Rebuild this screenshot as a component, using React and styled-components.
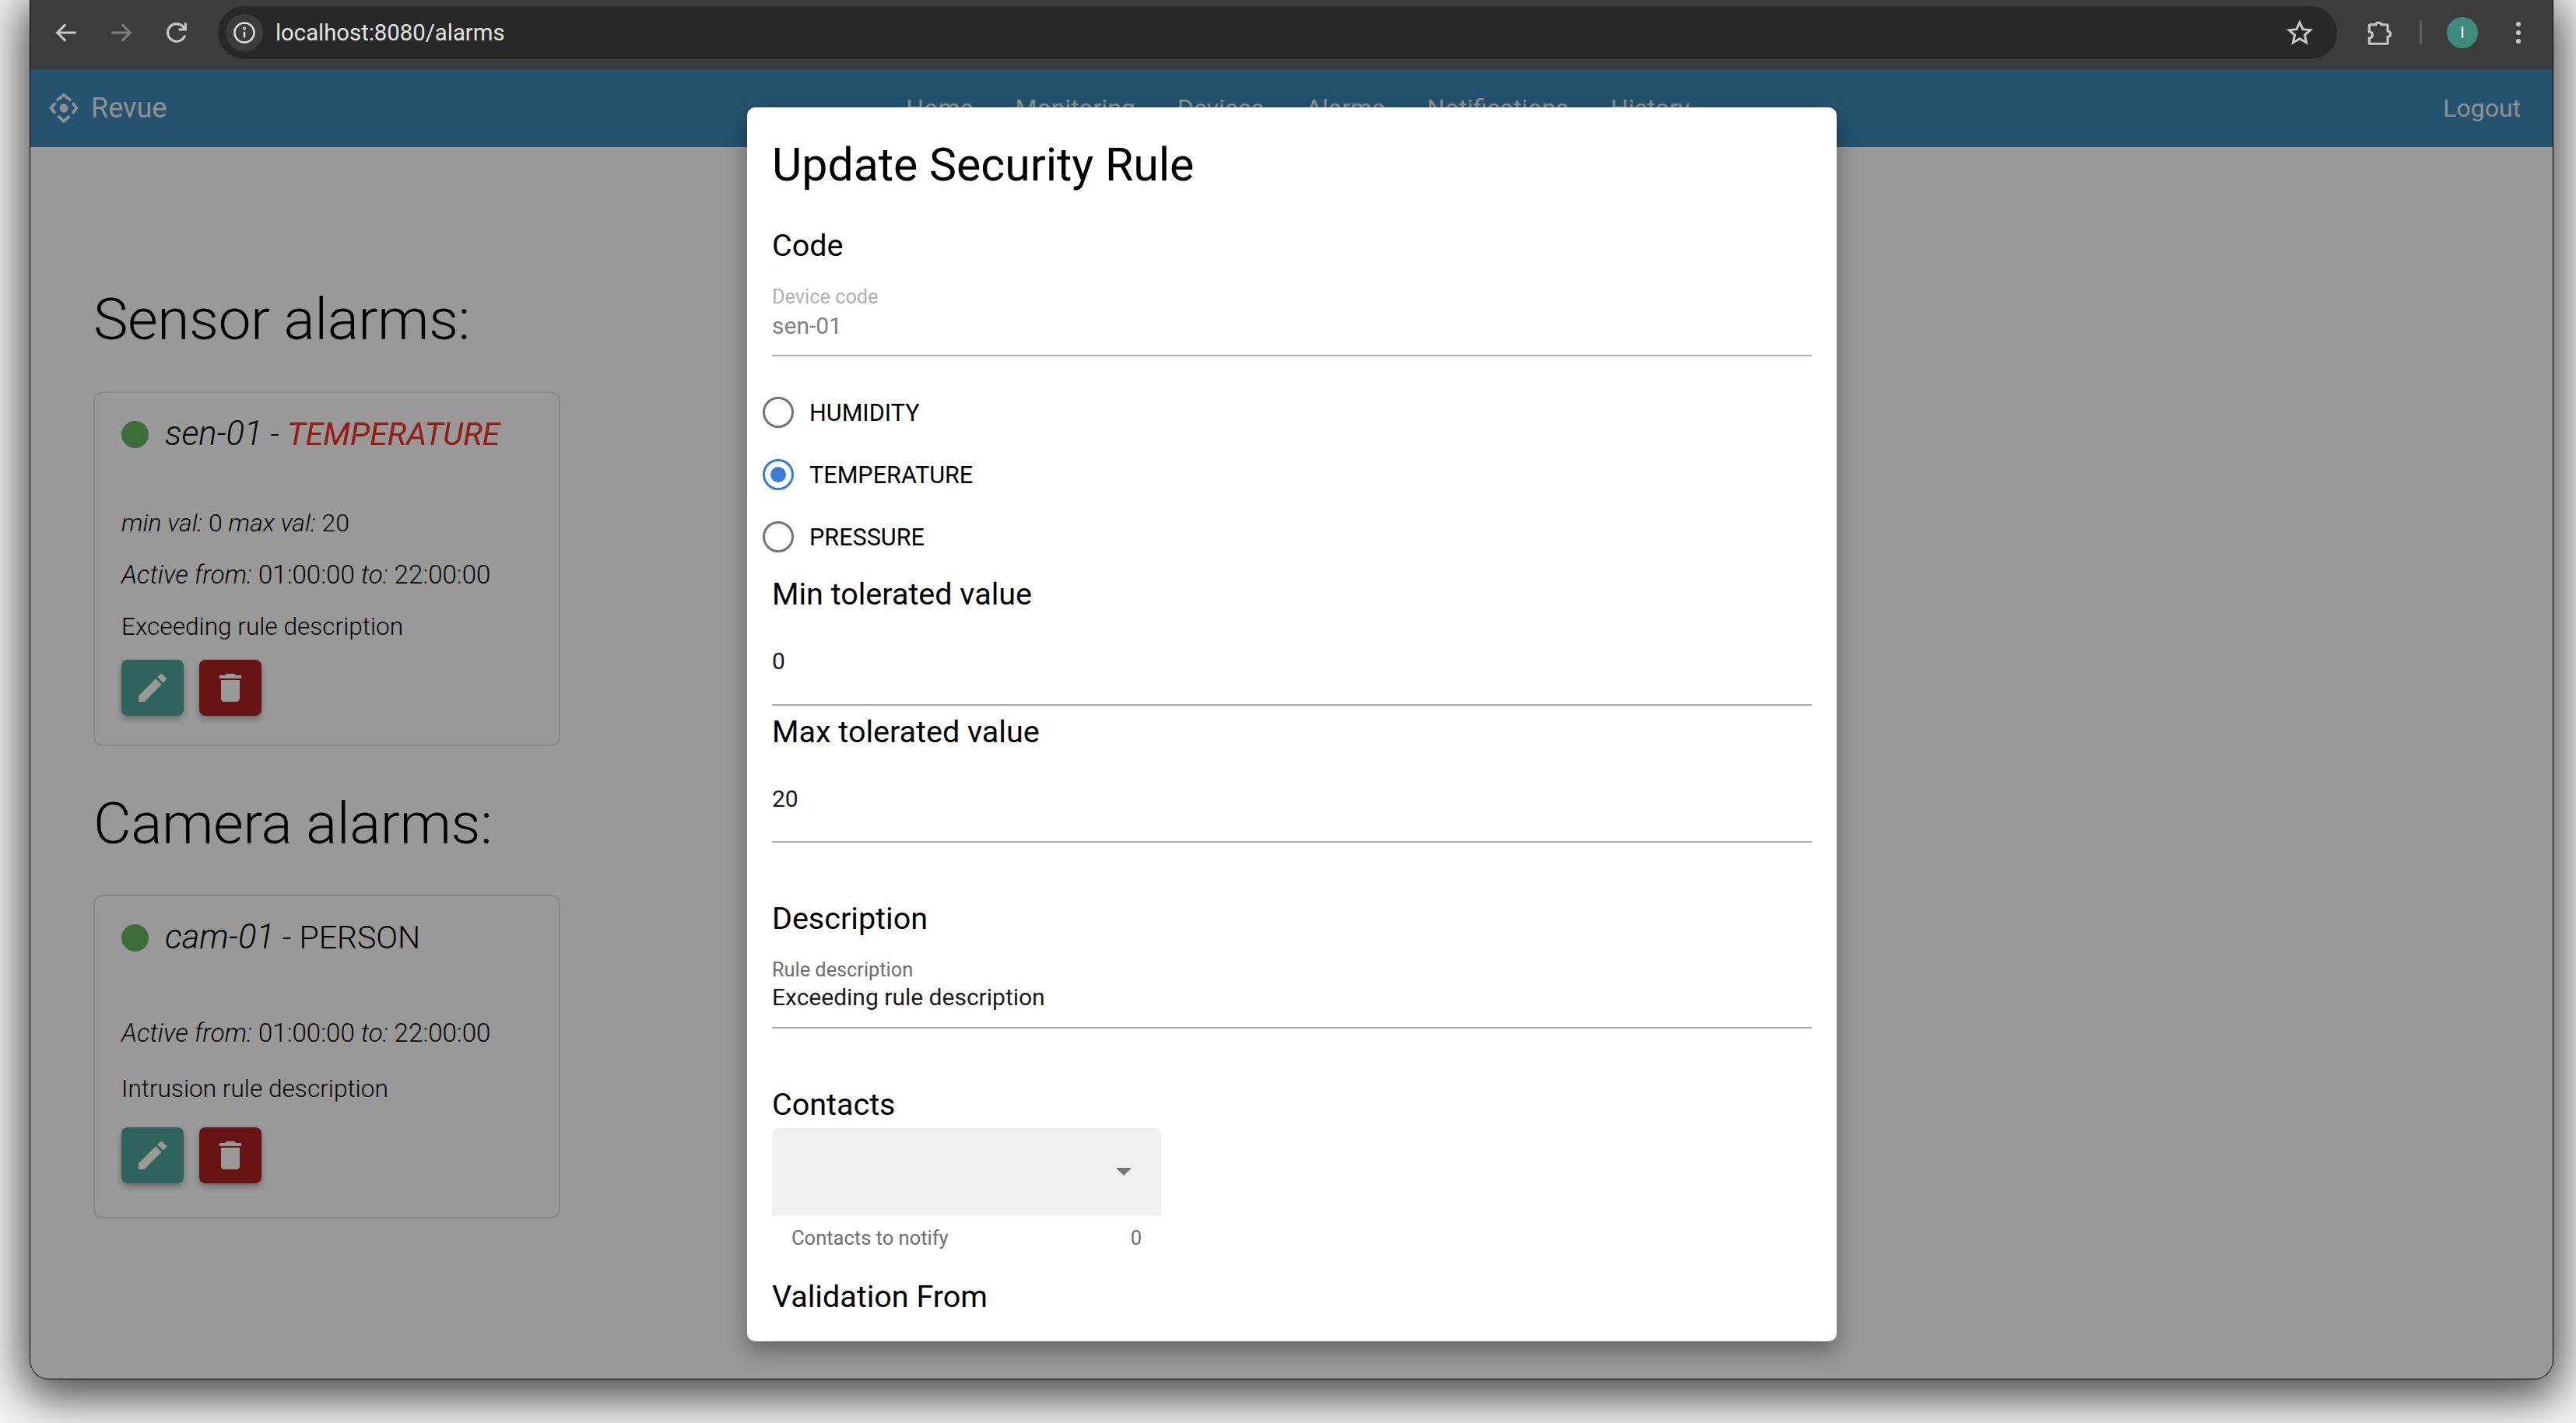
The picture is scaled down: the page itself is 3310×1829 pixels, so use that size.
import React from "react";
import styled, { createGlobalStyle } from "styled-components";

const GlobalStyle = createGlobalStyle`
  html, body {
    margin: 0;
    padding: 0;
    background: #f4f4f4;
  }
  body {
    font-family: Roboto, "Liberation Sans", sans-serif;
    color: #000;
  }
`;

const Desktop = styled.div`
  width: 3310px;
  height: 1829px;
  box-sizing: border-box;
  padding: 0 30px 57px 39px;
  overflow: hidden;
  background: #f4f4f4;
`;

const BrowserWindow = styled.div`
  position: relative;
  height: 100%;
  display: flex;
  flex-direction: column;
  background: #fff;
  border-radius: 0 0 24px 24px;
  box-shadow: 0 0 0 1px #000, 0 14px 60px 10px rgba(0, 0, 0, 0.72);
  overflow: hidden;
`;

const Toolbar = styled.div`
  height: 89px;
  flex: none;
  display: flex;
  align-items: center;
  box-sizing: border-box;
  padding-bottom: 4px;
  background: #3c3c3c;
  border-bottom: 1px solid #333;
`;

const ToolIcon = styled.svg`
  flex: none;
  width: ${(p) => p.$size || 34}px;
  height: ${(p) => p.$size || 34}px;
  color: ${(p) => p.$color || "#c7c7c7"};
`;

const NavButtons = styled.div`
  width: 241px;
  display: flex;
  align-items: center;
  gap: 37px;
  padding-left: 29px;
  box-sizing: border-box;
`;

const AddressBar = styled.div`
  width: 723px;
  flex: 1;
  height: 68px;
  display: flex;
  align-items: center;
  padding: 0 30px 0 10px;
  box-sizing: border-box;
  background: #282828;
  border-radius: 34px;
`;

const InfoChip = styled.div`
  width: 48px;
  height: 48px;
  display: flex;
  align-items: center;
  justify-content: center;
  border-radius: 50%;
  background: #3c3c3c;
`;

const UrlText = styled.span`
  flex: 1;
  margin-left: 16px;
  font-size: 29.3px;
  color: #e3e3e3;
`;

const ToolActions = styled.div`
  width: 277px;
  display: flex;
  align-items: center;
  padding-left: 35px;
  box-sizing: border-box;
`;

const Divider = styled.div`
  width: 3px;
  height: 32px;
  margin: 0 32px 0 33px;
  background: #5f5f5f;
  border-radius: 2px;
`;

const Avatar = styled.div`
  width: 40px;
  height: 40px;
  display: flex;
  align-items: center;
  justify-content: center;
  border-radius: 50%;
  background: #3f8a7c;
  color: #fff;
  font-size: 20px;
`;

const MenuDots = styled.div`
  display: flex;
  flex-direction: column;
  gap: 5px;
  margin-left: 49px;

  span {
    width: 6px;
    height: 6px;
    border-radius: 50%;
    background: #c7c7c7;
  }
`;

const NavBar = styled.header`
  height: 100px;
  flex: none;
  display: flex;
  align-items: center;
  justify-content: space-between;
  padding: 0 41px 0 24px;
  background: #3c89b9;
  color: #f0f0f0;
  font-size: 32px;
`;

const Brand = styled.div`
  display: flex;
  align-items: center;
  gap: 16px;
  font-size: 36px;
`;

const NavLinks = styled.nav`
  display: flex;
  gap: 54px;
  margin-left: -18px;
`;

const Main = styled.main`
  flex: 1;
  padding: 0 81px;
`;

const SectionTitle = styled.h2`
  margin: ${(p) => p.$top}px 0 ${(p) => p.$bottom}px;
  font-size: 75px;
  line-height: 94px;
  font-weight: 300;
  letter-spacing: -0.5px;
`;

const AlarmCard = styled.article`
  width: 600px;
  height: ${(p) => p.$height}px;
  box-sizing: border-box;
  padding: 29px 34px;
  border: 2px solid #e3e3e3;
  border-radius: 12px;
`;

const CardTitle = styled.div`
  display: flex;
  align-items: center;
  gap: 21px;
  font-size: 41px;
  line-height: 48px;
  font-weight: 300;
`;

const Dot = styled.span`
  width: 35px;
  height: 35px;
  flex: none;
  border-radius: 50%;
  background: #66b860;
`;

const Code = styled.i`
  font-size: 43.5px;
  font-weight: 300;
`;

const AlarmType = styled.span`
  font-style: ${(p) => (p.$alert ? "italic" : "normal")};
  font-weight: ${(p) => (p.$alert ? 400 : 300)};
  color: ${(p) => (p.$alert ? "#fa2f20" : "#000")};
`;

const CardLine = styled.p`
  margin: ${(p) => p.$top}px 0 0;
  font-size: ${(p) => p.$size || 32}px;
  line-height: 38px;
  font-weight: 300;

  i {
    font-style: italic;
  }
`;

const CardActions = styled.div`
  display: flex;
  gap: 20px;
  margin-top: ${(p) => p.$top}px;
`;

const SquareButton = styled.button`
  width: 80px;
  height: 72px;
  display: flex;
  align-items: center;
  justify-content: center;
  padding: 0;
  border: none;
  border-radius: 8px;
  background: ${(p) => p.$color};
  box-shadow: 0 4px 8px rgba(0, 0, 0, 0.3);
  color: #fff;
`;

const Scrim = styled.div`
  position: absolute;
  inset: 0;
  background: rgba(0, 0, 0, 0.4);
`;

const ChromeLayer = styled(Toolbar)`
  position: absolute;
  top: 0;
  left: 0;
  right: 0;
`;

const Modal = styled.section`
  position: absolute;
  top: 138px;
  left: 921px;
  width: 1400px;
  height: 1586px;
  box-sizing: border-box;
  padding: 0 32px;
  overflow: hidden;
  background: #fff;
  border-radius: 10px;
  box-shadow: 0 12px 28px rgba(0, 0, 0, 0.35);
`;

const ModalTitle = styled.h1`
  margin: 36px 0 0;
  font-size: 59px;
  line-height: 76px;
  font-weight: 400;
`;

const FieldHeading = styled.h3`
  margin: ${(p) => p.$top}px 0 0;
  font-size: 39.5px;
  line-height: 50px;
  font-weight: 400;
`;

const Field = styled.div`
  margin-top: ${(p) => p.$top}px;
  border-bottom: 2px solid ${(p) => p.$line || "#a8a8a8"};
  padding-bottom: ${(p) => p.$bottom}px;
`;

const FieldLabel = styled.div`
  font-size: 25.3px;
  line-height: 28px;
  color: ${(p) => (p.$muted ? "#b0b0b0" : "#6e6e6e")};
`;

const FieldValue = styled.div`
  margin-top: ${(p) => p.$top || 0}px;
  font-size: 30px;
  line-height: 38px;
  color: ${(p) => (p.$muted ? "#808080" : "#1a1a1a")};
`;

const RadioGroup = styled.div`
  display: flex;
  flex-direction: column;
  gap: 40px;
  margin: 52px 0 0 -12px;
`;

const RadioRow = styled.label`
  display: flex;
  align-items: center;
  gap: 20px;
  height: 40px;
  font-size: 30.6px;
`;

const RadioCircle = styled.span`
  width: 40px;
  height: 40px;
  flex: none;
  display: flex;
  align-items: center;
  justify-content: center;
  box-sizing: border-box;
  border-radius: 50%;
  border: 3px solid ${(p) => (p.$checked ? "#3a7bd5" : "#757575")};

  &::after {
    content: "";
    display: ${(p) => (p.$checked ? "block" : "none")};
    width: 20px;
    height: 20px;
    border-radius: 50%;
    background: #3a7bd5;
  }
`;

const SelectBox = styled.div`
  width: 500px;
  height: 112px;
  margin-top: 5px;
  display: flex;
  align-items: center;
  justify-content: flex-end;
  padding-right: 38px;
  box-sizing: border-box;
  background: #f0f0f0;
  border-radius: 8px 8px 0 0;
`;

const Caret = styled.span`
  width: 0;
  height: 0;
  border-left: 10px solid transparent;
  border-right: 10px solid transparent;
  border-top: 10px solid #757575;
`;

const SelectHint = styled.div`
  width: 500px;
  display: flex;
  justify-content: space-between;
  box-sizing: border-box;
  padding: 0 25px;
  margin-top: 14px;
  font-size: 25.5px;
  line-height: 30px;
  color: #6e6e6e;
`;

const BackIcon = () => (
  <ToolIcon viewBox="0 0 24 24" fill="none" stroke="currentColor" strokeWidth="2.2">
    <path d="M21 12H4M11.5 4.5 4 12l7.5 7.5" />
  </ToolIcon>
);

const ForwardIcon = () => (
  <ToolIcon viewBox="0 0 24 24" fill="none" stroke="currentColor" strokeWidth="2.2" $color="#7c7c7c">
    <path d="M3 12h17M12.5 4.5 20 12l-7.5 7.5" />
  </ToolIcon>
);

const ReloadIcon = () => (
  <ToolIcon viewBox="0 0 24 24" fill="none" stroke="currentColor" strokeWidth="2.2">
    <path d="M19.5 14.5A8 8 0 1 1 17.6 6.3L19.6 8.7" />
    <path d="M20 3v6.2h-6.2" />
  </ToolIcon>
);

const InfoIcon = () => (
  <ToolIcon viewBox="0 0 24 24" $size={30} $color="#e3e3e3" fill="none" stroke="currentColor" strokeWidth="2">
    <circle cx="12" cy="12" r="10" />
    <path d="M12 11v6" />
    <circle cx="12" cy="7.5" r="0.6" />
  </ToolIcon>
);

const StarIcon = () => (
  <ToolIcon viewBox="0 0 24 24" $size={36} fill="none" stroke="currentColor" strokeWidth="2">
    <path d="M12 3.2l2.7 5.9 6.4.7-4.8 4.3 1.4 6.4-5.7-3.3-5.7 3.3 1.4-6.4-4.8-4.3 6.4-.7z" />
  </ToolIcon>
);

const PuzzleIcon = () => (
  <ToolIcon viewBox="0 0 24 24" $size={38} fill="none" stroke="currentColor" strokeWidth="2">
    <path d="M4 6.5a1 1 0 0 1 1-1h4.2a2.4 2.4 0 0 1 4.6 0H18a1 1 0 0 1 1 1v4.2a2.3 2.3 0 0 1 0 4.6V20a1 1 0 0 1-1 1H5a1 1 0 0 1-1-1v-3.6a2.6 2.6 0 0 0 0-5.2z" />
  </ToolIcon>
);

const BrandIcon = () => (
  <ToolIcon viewBox="0 0 36 36" $size={38} $color="#f0f0f0" fill="none" stroke="currentColor" strokeWidth="3.6">
    <path d="M9.5 8.5 18 2l8.5 6.5M11 27.5 18 34l7-6.5M7.5 11.5 2.5 18l5 6.5M28.5 11.5l5 6.5-5 6.5" />
    <circle cx="18" cy="18" r="5.2" fill="currentColor" stroke="none" />
  </ToolIcon>
);

const PencilIcon = () => (
  <ToolIcon viewBox="0 0 24 24" $size={48} $color="#fff" fill="currentColor">
    <path d="M20.71 7.04c.39-.39.39-1.04 0-1.41l-2.34-2.34c-.37-.39-1.02-.39-1.41 0l-1.84 1.83 3.75 3.75M3 17.25V21h3.75L17.81 9.93l-3.75-3.75L3 17.25z" />
  </ToolIcon>
);

const TrashIcon = () => (
  <ToolIcon viewBox="0 0 24 24" $size={48} $color="#fff" fill="currentColor">
    <path d="M6 19c0 1.1.9 2 2 2h8c1.1 0 2-.9 2-2V7H6v12zM19 4h-3.5l-1-1h-5l-1 1H5v2h14V4z" />
  </ToolIcon>
);

const navItems = ["Home", "Monitoring", "Devices", "Alarms", "Notifications", "History"];

const Actions = ({ top }) => (
  <CardActions $top={top}>
    <SquareButton $color="#50a598" aria-label="edit">
      <PencilIcon />
    </SquareButton>
    <SquareButton $color="#ad2020" aria-label="delete">
      <TrashIcon />
    </SquareButton>
  </CardActions>
);

const BrowserChrome = () => (
  <ChromeLayer>
    <NavButtons>
      <BackIcon />
      <ForwardIcon />
      <ReloadIcon />
    </NavButtons>
    <AddressBar>
      <InfoChip>
        <InfoIcon />
      </InfoChip>
      <UrlText>localhost:8080/alarms</UrlText>
      <StarIcon />
    </AddressBar>
    <ToolActions>
      <PuzzleIcon />
      <Divider />
      <Avatar>I</Avatar>
      <MenuDots>
        <span />
        <span />
        <span />
      </MenuDots>
    </ToolActions>
  </ChromeLayer>
);

const App = () => {
  return (
    <>
      <GlobalStyle />
      <Desktop>
        <BrowserWindow>
          <Toolbar />
          <NavBar>
            <Brand>
              <BrandIcon />
              Revue
            </Brand>
            <NavLinks>
              {navItems.map((item) => (
                <span key={item}>{item}</span>
              ))}
            </NavLinks>
            <span>Logout</span>
          </NavBar>
          <Main>
            <SectionTitle $top={174} $bottom={46}>Sensor alarms:</SectionTitle>
            <AlarmCard $height={456}>
              <CardTitle>
                <Dot />
                <span>
                  <Code>sen-01</Code> - <AlarmType $alert>TEMPERATURE</AlarmType>
                </span>
              </CardTitle>
              <CardLine $top={71}>
                <i>min val:</i> 0 <i>max val:</i> 20
              </CardLine>
              <CardLine $top={29} $size={33}>
                <i>Active from:</i> 01:00:00 <i>to:</i> 22:00:00
              </CardLine>
              <CardLine $top={29} $size={31.6}>Exceeding rule description</CardLine>
              <Actions top={23} />
            </AlarmCard>
            <SectionTitle $top={52} $bottom={45}>Camera alarms:</SectionTitle>
            <AlarmCard $height={416}>
              <CardTitle>
                <Dot />
                <span>
                  <Code>cam-01</Code> - <AlarmType>PERSON</AlarmType>
                </span>
              </CardTitle>
              <CardLine $top={80} $size={33}>
                <i>Active from:</i> 01:00:00 <i>to:</i> 22:00:00
              </CardLine>
              <CardLine $top={34} $size={31.6}>Intrusion rule description</CardLine>
              <Actions top={30} />
            </AlarmCard>
          </Main>
          <Scrim />
          <BrowserChrome />
          <Modal>
            <ModalTitle>Update Security Rule</ModalTitle>
            <FieldHeading $top={41}>Code</FieldHeading>
            <Field $top={27} $bottom={18}>
              <FieldLabel $muted>Device code</FieldLabel>
              <FieldValue $muted $top={4}>sen-01</FieldValue>
            </Field>
            <RadioGroup>
              <RadioRow>
                <RadioCircle />
                HUMIDITY
              </RadioRow>
              <RadioRow>
                <RadioCircle $checked />
                TEMPERATURE
              </RadioRow>
              <RadioRow>
                <RadioCircle />
                PRESSURE
              </RadioRow>
            </RadioGroup>
            <FieldHeading $top={29}>Min tolerated value</FieldHeading>
            <Field $top={42} $bottom={36}>
              <FieldValue>0</FieldValue>
            </Field>
            <FieldHeading $top={9}>Max tolerated value</FieldHeading>
            <Field $top={42} $bottom={35}>
              <FieldValue>20</FieldValue>
            </Field>
            <FieldHeading $top={73}>Description</FieldHeading>
            <Field $top={27} $bottom={19}>
              <FieldLabel>Rule description</FieldLabel>
              <FieldValue $top={2}>Exceeding rule description</FieldValue>
            </Field>
            <FieldHeading $top={73}>Contacts</FieldHeading>
            <SelectBox>
              <Caret />
            </SelectBox>
            <SelectHint>
              <span>Contacts to notify</span>
              <span>0</span>
            </SelectHint>
            <FieldHeading $top={36}>Validation From</FieldHeading>
          </Modal>
        </BrowserWindow>
      </Desktop>
    </>
  );
};

export default App;
